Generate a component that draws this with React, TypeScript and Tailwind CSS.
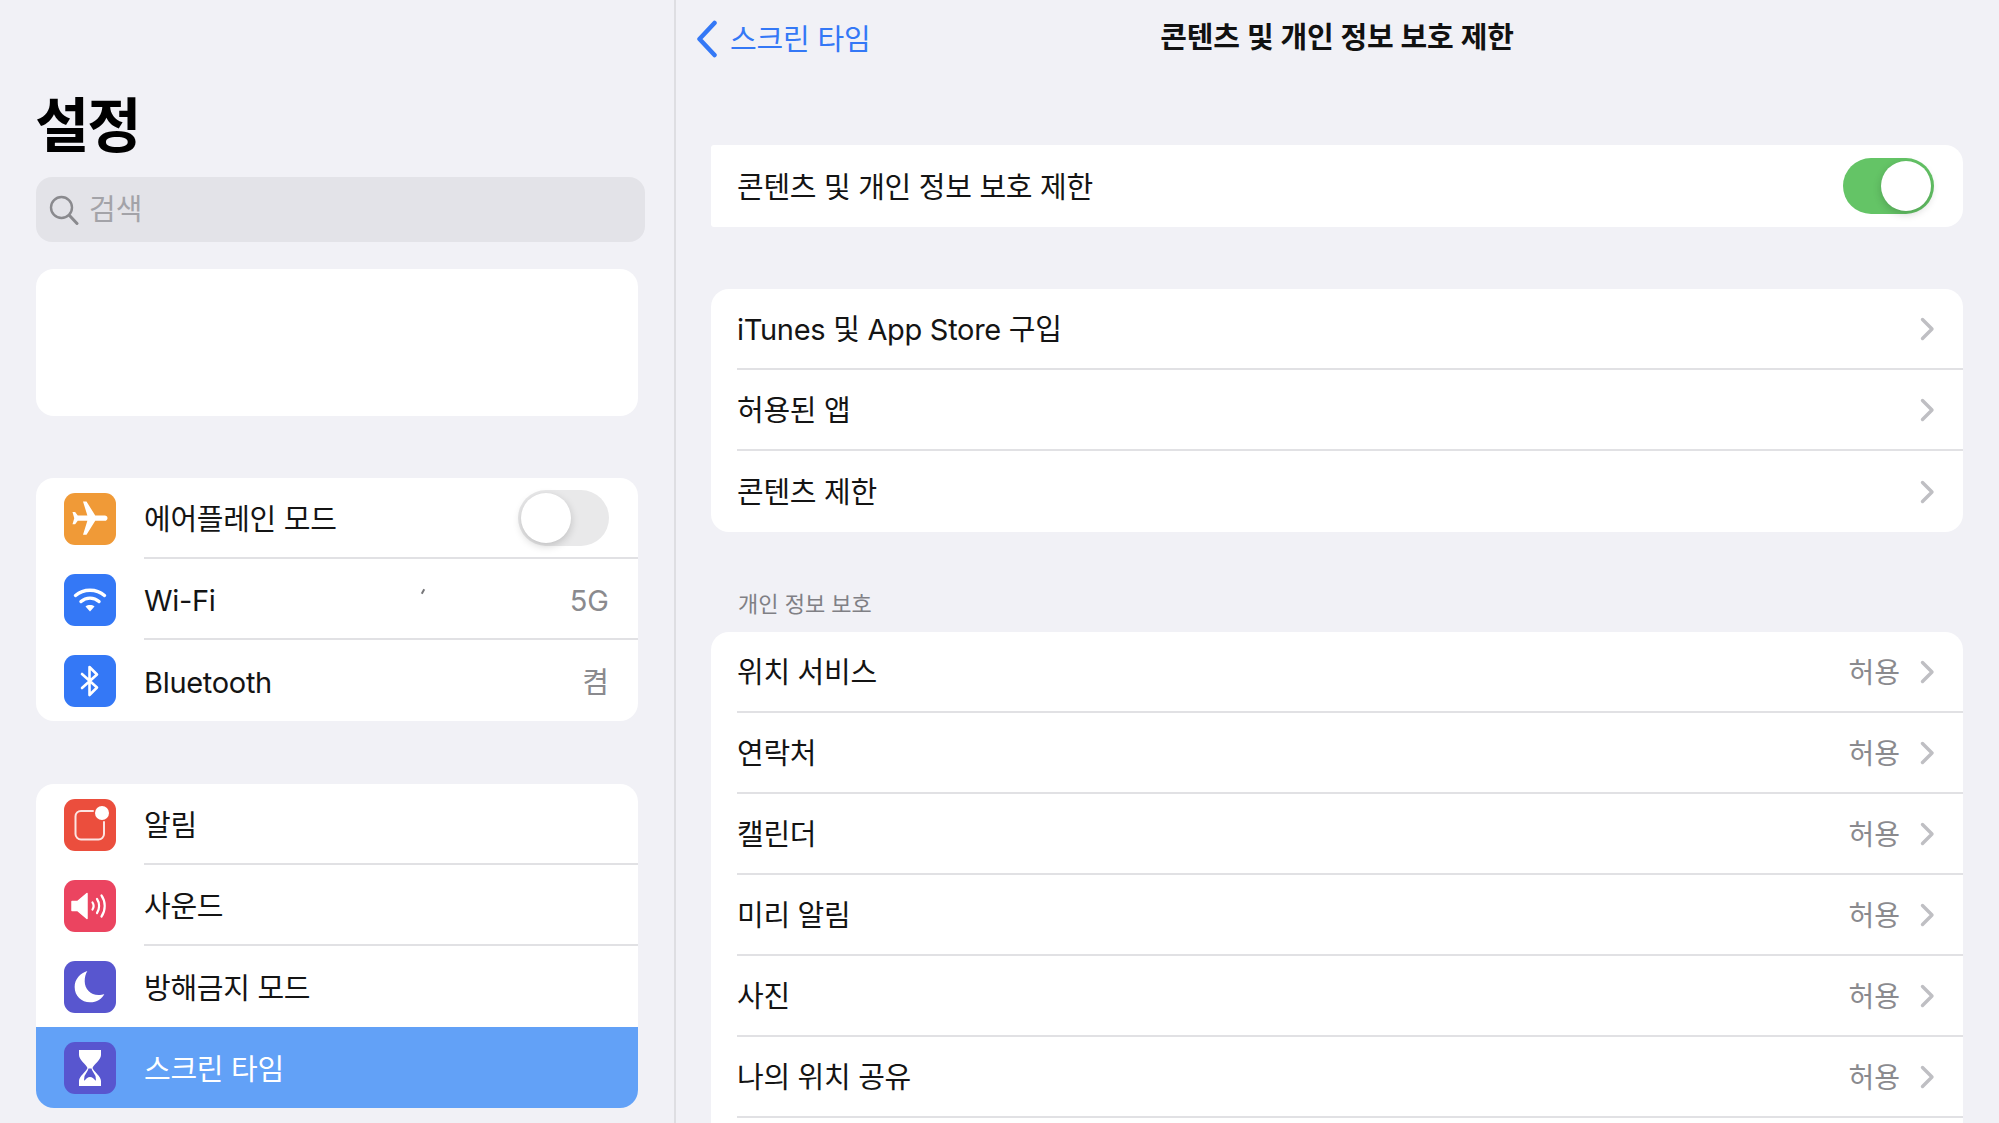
import React from 'react';

const font = 'font-[Inter,"Noto_Sans_CJK_KR",sans-serif]';

function Chevron() {
  return (
    <svg width="15" height="24" viewBox="0 0 15 24" fill="none" className="shrink-0">
      <path d="M2.500 2.500L12 12L2.500 21.500" stroke="#bfbfc3" strokeWidth="3.400" strokeLinecap="round" strokeLinejoin="round" />
    </svg>
  );
}

function AirplaneIcon() {
  return (
    <svg width="42" height="42" viewBox="0 0 24 24" fill="white">
      <path transform="rotate(90 12 12)" d="M21 16v-2l-8-5V3.500c0-.83-.67-1.500-1.500-1.500S10 2.670 10 3.500V9l-8 5v2l8-2.500V19l-2 1.500V22l3.500-1 3.500 1v-1.500L13 19v-5.500l8 2.500z" />
    </svg>
  );
}

function WifiIcon() {
  return (
    <svg width="34" height="28" viewBox="0 0 34 28" fill="none">
      <path d="M2.500 9.500C10.500 2.500 23.500 2.500 31.500 9.500" stroke="white" strokeWidth="3.400" strokeLinecap="round" />
      <path d="M8 15.500C13 11 21 11 26 15.500" stroke="white" strokeWidth="3.400" strokeLinecap="round" />
      <path d="M12.500 20.500C15 18.600 19 18.600 21.500 20.500L17 25.500Z" fill="white" />
    </svg>
  );
}

function BluetoothIcon() {
  return (
    <svg width="22" height="34" viewBox="0 0 22 34" fill="none">
      <path d="M3 10L18 23.500L10.500 31V3L18 10.500L3 24" stroke="white" strokeWidth="2.600" strokeLinecap="round" strokeLinejoin="round" />
    </svg>
  );
}

function NotificationIcon() {
  return (
    <svg width="52" height="52" viewBox="0 0 52 52" fill="none">
      <path d="M29 12H17C14 12 11.500 14 11.500 17.500V35C11.500 38 14 40.500 17 40.500H34.500C37.500 40.500 40 38 40 35V23" stroke="white" strokeOpacity="0.85" strokeWidth="2" strokeLinecap="round" />
      <circle cx="38" cy="14" r="7" fill="white" />
    </svg>
  );
}

function SoundIcon() {
  return (
    <svg width="40" height="34" viewBox="0 0 40 34" fill="none">
      <path d="M2 12.500H7.500L17 4.500V29.500L7.500 21.500H2Z" fill="white" stroke="white" strokeWidth="1.500" strokeLinejoin="round" />
      <path d="M22.500 13.500C23.800 15.500 23.800 18.500 22.500 20.500" stroke="white" strokeWidth="2.200" strokeLinecap="round" />
      <path d="M27 10C29.800 14 29.800 20 27 24" stroke="white" strokeWidth="2.200" strokeLinecap="round" />
      <path d="M31.500 6.500C35.800 12.500 35.800 21.500 31.500 27.500" stroke="white" strokeWidth="2.200" strokeLinecap="round" />
    </svg>
  );
}

function MoonIcon() {
  return (
    <svg width="36" height="36" viewBox="0 0 34 34" fill="white">
      <path d="M14.500 2C8 4 2.500 9.500 2.500 17C2.500 25.500 9 31.500 17 31.500C23.500 31.500 28.500 28 30.500 23.500C29 24.200 27 24.500 25 24.500C17.500 24.500 12 19 12 11.500C12 8 12.800 4.800 14.500 2Z" />
    </svg>
  );
}

function HourglassIcon() {
  return (
    <svg width="26" height="38" viewBox="0 0 26 38" fill="none">
      <path d="M2 1H24V6C24 11 17 15 15.500 19C17 23 24 27 24 32V37H2V32C2 27 9 23 10.500 19C9 15 2 11 2 6Z" fill="white" />
      <path d="M11.500 19.500C11 22 9 24 7.500 27L7 31.500H19L18.500 27C17 24 15 22 14.500 19.500Z" fill="#5856cf" />
      <path d="M6.500 33.500C8.500 29.500 11 28 13 28C15 28 17.500 29.500 19.500 33.500Z" fill="white" />
    </svg>
  );
}

function Toggle({ on }: { on: boolean }) {
  return (
    <div className={`flex h-[56px] w-[91px] shrink-0 items-center rounded-full px-[3px] ${on ? 'justify-end bg-[#64c466]' : 'justify-start bg-[#e9e9ea]'}`}>
      <div className="h-[50px] w-[50px] rounded-full bg-white shadow-[0_3px_8px_rgba(0,0,0,0.18)]" />
    </div>
  );
}

type SideRow = {
  label: string;
  icon: React.ReactNode;
  color: string;
  value?: string;
  toggle?: boolean;
  selected?: boolean;
};

function SidebarRow({ row, last }: { row: SideRow; last: boolean }) {
  return (
    <div className={`relative flex h-[81px] items-center pl-[28px] ${row.selected ? 'bg-[#62a1f7]' : ''}`}>
      <div className={`flex h-[52px] w-[52px] shrink-0 items-center justify-center rounded-[11px] ${row.color}`}>
        {row.icon}
      </div>
      <div className={`ml-[28px] flex h-full min-w-0 flex-1 items-center pr-[29px] ${last ? '' : 'border-b-2 border-[#e1e1e4]'}`}>
        <span className={`flex-1 pt-[5px] text-[29px] tracking-[-0.3px] ${row.selected ? 'text-white' : 'text-[#141414]'}`}>{row.label}</span>
        {row.value && <span className="pt-[5px] text-[29px] text-[#8a8a8e]">{row.value}</span>}
        {row.toggle && <Toggle on={false} />}
      </div>
    </div>
  );
}

const network: SideRow[] = [
  { label: '에어플레인 모드', icon: <AirplaneIcon />, color: 'bg-[#f09a37]', toggle: true },
  { label: 'Wi-Fi', icon: <WifiIcon />, color: 'bg-[#3478f6]', value: '5G' },
  { label: 'Bluetooth', icon: <BluetoothIcon />, color: 'bg-[#3478f6]', value: '켬' },
];

const general: SideRow[] = [
  { label: '알림', icon: <NotificationIcon />, color: 'bg-[#eb4e3d]' },
  { label: '사운드', icon: <SoundIcon />, color: 'bg-[#eb4460]' },
  { label: '방해금지 모드', icon: <MoonIcon />, color: 'bg-[#5856cf]' },
  { label: '스크린 타임', icon: <HourglassIcon />, color: 'bg-[#5856cf]', selected: true },
];

function DetailRow({ label }: { label: string }) {
  return (
    <div className="flex h-[81px] items-center border-b-2 border-[#e1e1e4] pr-[28px] last:border-b-0">
      <span className="flex-1 pt-[3px] text-[29px] tracking-[-0.3px] text-[#141414]">{label}</span>
      <Chevron />
    </div>
  );
}

export default function App() {
  return (
    <div className={`flex h-[1123px] w-[1999px] overflow-hidden bg-[#f1f1f6] ${font}`}>
      {/* Sidebar */}
      <aside className="flex h-full w-[676px] shrink-0 flex-col border-r-2 border-[#dedee2] pl-[36px]">
        <h1 className="mt-[86px] -ml-[1px] h-[80px] text-[59px] leading-[80px] font-bold tracking-[-2px] text-black">설정</h1>
        <div className="mt-[11px] flex h-[65px] w-[609px] items-center rounded-[16px] bg-[#e3e3e8] pl-[13px]">
          <svg width="30" height="30" viewBox="0 0 30 30" fill="none">
            <circle cx="12.500" cy="12.500" r="10.500" stroke="#8a8a8e" strokeWidth="2.400" />
            <path d="M20.500 20.500L28 28.500" stroke="#8a8a8e" strokeWidth="3" strokeLinecap="round" />
          </svg>
          <span className="ml-[10px] text-[29px] text-[#a3a3a8]">검색</span>
        </div>
        <div className="mt-[27px] h-[147px] w-[602px] rounded-[18px] bg-white" />
        <div className="relative mt-[62px] w-[602px] overflow-hidden rounded-[18px] bg-white">
          {network.map((row, i) => (
            <SidebarRow key={row.label} row={row} last={i === network.length - 1} />
          ))}
          <div className="absolute top-[111px] left-[386px] h-[5px] w-[2px] rotate-[30deg] bg-[#77777a]" />
        </div>
        <div className="mt-[63px] w-[602px] overflow-hidden rounded-[18px] bg-white">
          {general.map((row, i) => (
            <SidebarRow key={row.label} row={row} last={i >= general.length - 2} />
          ))}
        </div>
      </aside>

      {/* Detail */}
      <main className="flex h-full min-w-0 flex-1 flex-col pr-[36px] pl-[35px]">
        <header className="relative flex h-[72px] shrink-0 items-center justify-center">
          <div className="absolute top-[17px] left-[-15px] flex items-center">
            <svg width="22" height="38" viewBox="0 0 22 38" fill="none">
              <path d="M18.500 3L3.500 19L18.500 35" stroke="#3478f6" strokeWidth="4.500" strokeLinecap="round" strokeLinejoin="round" />
            </svg>
            <span className="mt-[1px] ml-[12px] text-[29px] tracking-[-0.2px] text-[#3478f6]">스크린 타임</span>
          </div>
          <span className="pt-[4px] text-[29px] font-semibold tracking-[-0.2px] text-[#111]">콘텐츠 및 개인 정보 보호 제한</span>
        </header>

        <div className="mt-[73px] flex h-[82px] shrink-0 items-center rounded-r-[18px] rounded-l-[3px] bg-white pr-[29px] pl-[26px]">
          <span className="flex-1 pt-[3px] text-[29px] tracking-[-0.3px] text-[#141414]">콘텐츠 및 개인 정보 보호 제한</span>
          <Toggle on />
        </div>

        <div className="mt-[62px] shrink-0 rounded-[18px] bg-white pl-[26px]">
          <DetailRow label="iTunes 및 App Store 구입" />
          <DetailRow label="허용된 앱" />
          <DetailRow label="콘텐츠 제한" />
        </div>

        <div className="mt-[53px] h-[47px] shrink-0 pl-[27px] text-[22px] leading-[38px] text-[#808085]">개인 정보 보호</div>

        <div className="shrink-0 rounded-t-[18px] bg-white pl-[26px]">
          {['위치 서비스', '연락처', '캘린더', '미리 알림', '사진', '나의 위치 공유'].map((label) => (
            <div key={label} className="flex h-[81px] items-center border-b-2 border-[#e1e1e4] pr-[28px]">
              <span className="flex-1 pt-[2px] text-[29px] tracking-[-0.3px] text-[#141414]">{label}</span>
              <span className="mr-[20px] pt-[3px] text-[28px] text-[#8a8a8e]">허용</span>
              <Chevron />
            </div>
          ))}
          <div className="h-[40px]" />
        </div>
      </main>
    </div>
  );
}
